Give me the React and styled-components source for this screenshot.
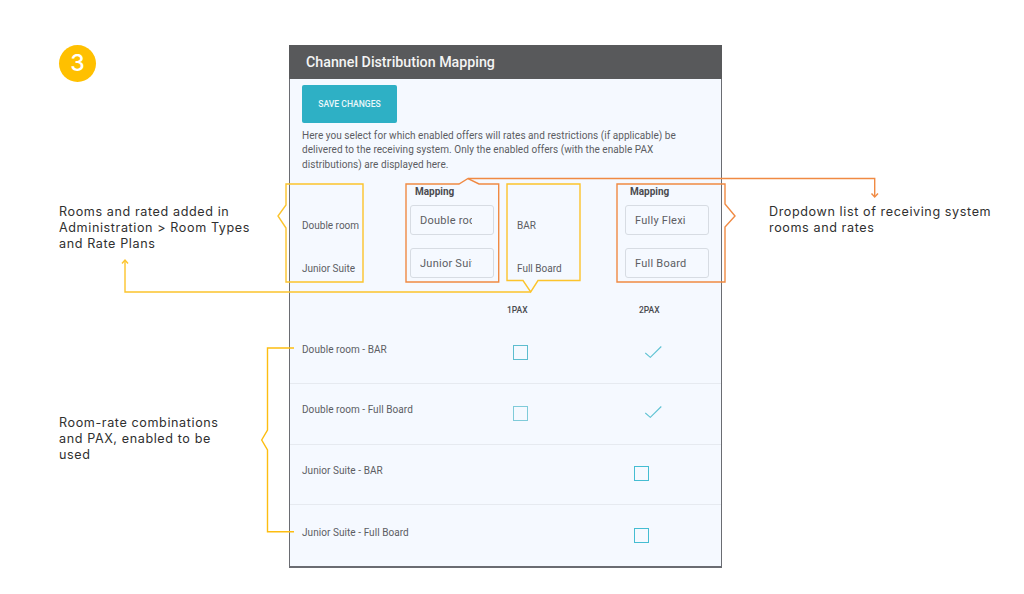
import React from "react";
import styled, { createGlobalStyle } from "styled-components";

const Global = createGlobalStyle`
  html, body { margin: 0; padding: 0; background: #fff; }
  body { font-family: Roboto, "Liberation Sans", sans-serif; }
`;

const Page = styled.div`
  position: relative;
  display: flex;
  width: 1024px;
  height: 594px;
  overflow: hidden;
  background: #fff;
`;

const LeftColumn = styled.div`
  width: 230px;
  margin-left: 59px;
  flex: none;
`;

const RightColumn = styled.div`
  width: 240px;
  margin-left: 47px;
  flex: none;
`;

const Badge = styled.div`
  width: 37px;
  height: 37px;
  margin-top: 45px;
  border-radius: 50%;
  background: #ffc000;
  color: #fff;
  font: 500 23px/37px Inter, sans-serif;
  text-align: center;
`;

const Note = styled.p`
  margin: ${(p) => p.$top}px 0 0;
  width: ${(p) => p.$width}px;
  color: #303030;
  font: 400 12.6px/16px Inter, sans-serif;
  letter-spacing: 0.6px;
`;

const Panel = styled.section`
  width: 433px;
  height: 523px;
  margin-top: 45px;
  box-sizing: border-box;
  flex: none;
  display: flex;
  flex-direction: column;
  background: #f5f9ff;
  border: 1px solid #6a6c72;
  border-top: 0;
  border-bottom-width: 2px;
`;

const PanelHeader = styled.h1`
  margin: 0 -1px;
  height: 34px;
  padding-left: 17px;
  background: #58595b;
  color: #f4f4f4;
  font: 500 14.25px/34px Roboto, sans-serif;
`;

const PanelBody = styled.div`
  padding: 6px 12px 0;
  display: flex;
  flex-direction: column;
`;

const SaveButton = styled.button`
  width: 95px;
  height: 38px;
  padding: 0;
  border: 0;
  border-radius: 2px;
  background: #2eb0c5;
  color: #e9f7fa;
  font: 500 8.6px/38px Roboto, sans-serif;
`;

const Intro = styled.p`
  margin: 5.5px 0 0;
  width: 400px;
  color: #5c5d62;
  font: 400 10px/14.5px Roboto, sans-serif;
  letter-spacing: 0.05px;
`;

const MappingGrid = styled.div`
  display: grid;
  grid-template-columns: 107.5px 107.5px 107.5px 107.5px;
  margin-top: 12.5px;
  height: 97px;
`;

const LabelColumn = styled.div`
  display: flex;
  flex-direction: column;
  padding-top: 35px;
  gap: 31px;
`;

const CellLabel = styled.span`
  color: #5c5d63;
  font: 400 10px/12px Roboto, sans-serif;
`;

const FieldColumn = styled.div`
  display: flex;
  flex-direction: column;
  margin-left: 0.5px;
`;

const MappingTitle = styled.div`
  height: 20px;
  padding-left: 5px;
  color: #4a4b50;
  font: 700 10px/13px Roboto, sans-serif;
`;

const MappingInput = styled.input`
  box-sizing: border-box;
  display: block;
  width: 84px;
  height: 30px;
  margin-top: ${(p) => p.$top}px;
  padding: 2px 21px 0 9px;
  border: 1px solid #d7dce3;
  border-radius: 3px;
  background: #f5f9ff;
  color: #5c5d63;
  font: 400 11px/26px Roboto, sans-serif;
  letter-spacing: 0.25px;
  outline: 0;
`;

const PaxHead = styled.div`
  display: grid;
  grid-template-columns: 205px 20px 112px 20px;
  height: 29px;
  align-items: start;
  padding-top: 22px;
`;

const PaxLabel = styled.span`
  grid-column: ${(p) => p.$col};
  color: #4a4b50;
  font: 500 8.5px/12px Roboto, sans-serif;
  text-align: center;
`;

const Rows = styled.div`
  margin: 0 -12px;
`;

const Row = styled.div`
  box-sizing: border-box;
  height: ${(p) => p.$h}px;
  padding-left: 12px;
  display: flex;
  border-bottom: ${(p) => (p.$last ? "0" : "1px solid #e6eaf0")};
`;

const RowLabel = styled.span`
  width: 211px;
  flex: none;
  padding-top: ${(p) => p.$pad}px;
  color: #5c5d63;
  font: 400 10px/12px Roboto, sans-serif;
  letter-spacing: 0.06px;
`;

const Check = styled.span`
  box-sizing: border-box;
  display: block;
  flex: none;
  width: 15px;
  height: 15px;
  margin-top: ${(p) => p.$top}px;
  margin-left: ${(p) => p.$left}px;
  border: 1px solid ${(p) => p.$color};
`;

const Tick = styled.svg`
  flex: none;
  width: 17px;
  height: 12px;
  margin-top: ${(p) => p.$top}px;
  margin-left: ${(p) => p.$left}px;
`;

const Callouts = styled.svg`
  position: absolute;
  inset: 0;
  width: 1024px;
  height: 594px;
  pointer-events: none;
  fill: none;
`;

const TickMark = ({ top, left }) => (
  <Tick $top={top} $left={left} viewBox="0 0 17 12" fill="none">
    <path d="M0.3 7 L5.3 11.3 L16.3 0.5" stroke="#5ec2d3" strokeWidth="1.1" />
  </Tick>
);

const Y = "#fcc42c";
const O = "#f08a43";

export default function App() {
  return (
    <Page>
      <Global />
      <LeftColumn>
        <Badge>3</Badge>
        <Note $top={122} $width={205}>
          Rooms and rated added in Administration &gt; Room Types and Rate Plans
        </Note>
        <Note $top={163} $width={175}>
          Room-rate combinations and PAX, enabled to be used
        </Note>
      </LeftColumn>
      <Panel>
        <PanelHeader>Channel Distribution Mapping</PanelHeader>
        <PanelBody>
          <SaveButton>SAVE CHANGES</SaveButton>
          <Intro>
            Here you select for which enabled offers will rates and restrictions (if applicable) be
            delivered to the receiving system. Only the enabled offers (with the enable PAX
            distributions) are displayed here.
          </Intro>
          <MappingGrid>
            <LabelColumn>
              <CellLabel>Double room</CellLabel>
              <CellLabel>Junior Suite</CellLabel>
            </LabelColumn>
            <FieldColumn>
              <MappingTitle>Mapping</MappingTitle>
              <MappingInput $top={0} readOnly value="Double room" />
              <MappingInput $top={13} readOnly value="Junior Suite" />
            </FieldColumn>
            <LabelColumn>
              <CellLabel>BAR</CellLabel>
              <CellLabel>Full Board</CellLabel>
            </LabelColumn>
            <FieldColumn>
              <MappingTitle>Mapping</MappingTitle>
              <MappingInput $top={0} readOnly value="Fully Flexi" />
              <MappingInput $top={13} readOnly value="Full Board" />
            </FieldColumn>
          </MappingGrid>
          <PaxHead>
            <PaxLabel $col={2}>1PAX</PaxLabel>
            <PaxLabel $col={4}>2PAX</PaxLabel>
          </PaxHead>
          <Rows>
            <Row $h={51}>
              <RowLabel $pad={11}>Double room - BAR</RowLabel>
              <Check $top={12} $left={0} $color="#5dbdcf" />
              <TickMark top={13} left={117} />
            </Row>
            <Row $h={61}>
              <RowLabel $pad={20}>Double room - Full Board</RowLabel>
              <Check $top={22} $left={0} $color="#7fcbd9" />
              <TickMark top={22} left={117} />
            </Row>
            <Row $h={60}>
              <RowLabel $pad={20}>Junior Suite - BAR</RowLabel>
              <Check $top={21} $left={121} $color="#45bdd2" />
            </Row>
            <Row $h={60} $last>
              <RowLabel $pad={22}>Junior Suite - Full Board</RowLabel>
              <Check $top={23} $left={121} $color="#45bdd2" />
            </Row>
          </Rows>
        </PanelBody>
      </Panel>
      <RightColumn>
        <Note $top={204} $width={240}>
          Dropdown list of receiving system rooms and rates
        </Note>
      </RightColumn>
      <Callouts viewBox="0 0 1024 594">
        <g stroke={Y} strokeWidth="1.4">
          <path d="M286 184 H363 V282 H286 V228 L278 216 L286 205 Z" />
          <path d="M507 184 H580 V280.5 H538 L530.7 292 L523 280.5 H507 Z" />
          <path d="M530.7 292 H125 V260.5" />
          <path d="M122 263.5 L125 260 L128 263.5" />
        </g>
        <path
          d="M294 348 H267.5 V430 L261.7 440 L267.5 450 V531.7 H294"
          stroke="#fdbd10"
          strokeWidth="1.4"
        />
        <g stroke={O} strokeWidth="1.4">
          <path d="M406 184 H459 L468 178.5 L479 184 H498.7 V282 H406 Z" />
          <path d="M468 178.5 H874.7 V197" />
          <path d="M871.5 193.5 L874.7 197 L878 193.5" />
          <path d="M617 184 H725 V204 L735 216 L725 227 V282 H617 Z" />
        </g>
      </Callouts>
    </Page>
  );
}
